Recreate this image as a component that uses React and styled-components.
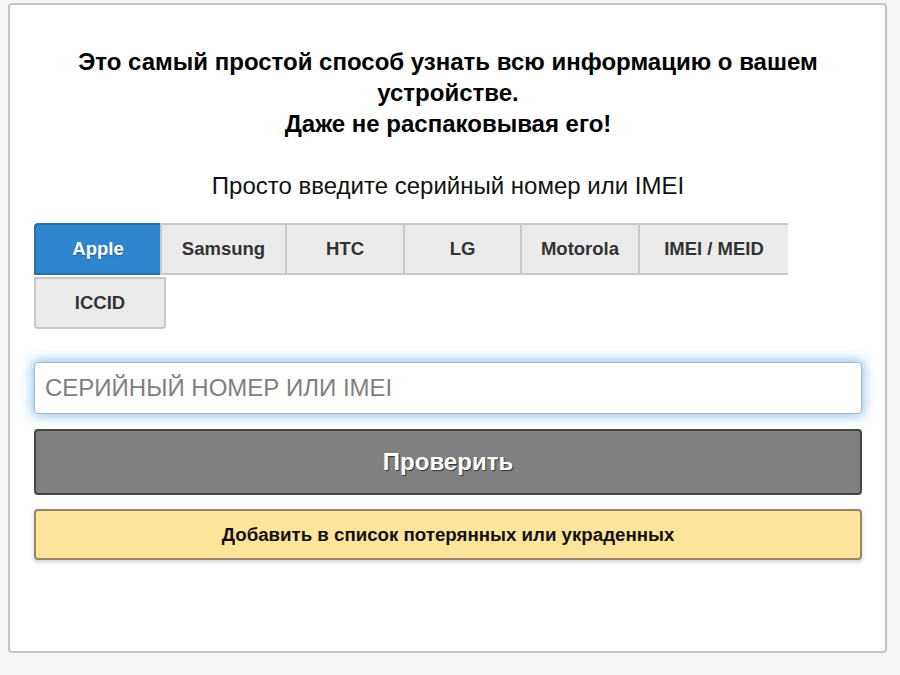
import React, { useState } from "react";
import styled, { createGlobalStyle } from "styled-components";

const GlobalStyle = createGlobalStyle`
  html, body {
    margin: 0;
    padding: 0;
    background: #f7f7f7;
    font-family: "Liberation Sans", Arial, sans-serif;
  }
`;

const Card = styled.div`
  box-sizing: border-box;
  width: 879px;
  height: 650px;
  margin: 3px 0 0 8px;
  padding: 41px 23px 0 24px;
  background: #fff;
  border: 2px solid #c3c3c3;
  border-radius: 4px;
`;

const Heading = styled.h1`
  margin: 0 auto;
  max-width: 790px;
  font-size: 24px;
  line-height: 31px;
  font-weight: bold;
  text-align: center;
  color: #000;
`;

const Lead = styled.p`
  margin: 31px 0 22px;
  font-size: 24px;
  line-height: 31px;
  text-align: center;
  color: #111;
`;

const Tabs = styled.div`
  display: flex;
  flex-wrap: wrap;
  row-gap: 2px;
`;

const Tab = styled.button`
  box-sizing: border-box;
  width: ${(p) => p.$w}px;
  height: 52px;
  padding: 0;
  font-family: inherit;
  font-size: 18.5px;
  font-weight: bold;
  cursor: pointer;
  color: ${(p) => (p.$active ? "#fff" : "#333")};
  background: ${(p) => (p.$active ? "#2f86cc" : "#ebebeb")};
  border-style: solid;
  border-color: ${(p) => (p.$active ? "#2a70a8" : "#c8c8c8")};
  border-width: 2px ${(p) => (p.$closed ? "2px" : "0")} 2px 2px;
  border-radius: ${(p) =>
    p.$active ? "4px 0 0 0" : p.$closed ? "0 0 4px 4px" : "0"};
  text-shadow: ${(p) => (p.$active ? "0 1px 1px rgba(0,0,0,.3)" : "none")};
`;

const Field = styled.input`
  box-sizing: border-box;
  display: block;
  width: 100%;
  height: 52px;
  margin-top: 33px;
  padding: 0 10px;
  font-family: inherit;
  font-size: 24px;
  color: #333;
  background: #fff;
  border: 1px solid #9fb6cc;
  border-radius: 4px;
  outline: none;
  box-shadow: 0 0 12px 2px rgba(102, 168, 225, 0.7);
  caret-color: #000;

  &::placeholder {
    color: #808080;
  }
`;

const CheckButton = styled.button`
  box-sizing: border-box;
  display: block;
  width: 100%;
  height: 66px;
  margin-top: 15px;
  font-family: inherit;
  font-size: 24px;
  font-weight: bold;
  color: #fff;
  text-shadow: 1px 1px 1px #333;
  background: #808080;
  border: 2px solid #454545;
  border-radius: 4px;
  cursor: pointer;
`;

const LostButton = styled.button`
  box-sizing: border-box;
  display: block;
  width: 100%;
  height: 51px;
  margin-top: 14px;
  font-family: inherit;
  font-size: 18.7px;
  font-weight: bold;
  color: #111;
  background: #ffe49c;
  border: 2px solid #9a8468;
  border-radius: 4px;
  box-shadow: 0 2px 4px rgba(0, 0, 0, 0.18);
  cursor: pointer;
`;

const brands = [
  { name: "Apple", w: 126 },
  { name: "Samsung", w: 125 },
  { name: "HTC", w: 118 },
  { name: "LG", w: 117 },
  { name: "Motorola", w: 118 },
  { name: "IMEI / MEID", w: 150 },
  { name: "ICCID", w: 132, closed: true },
];

export default function App() {
  const [active, setActive] = useState("Apple");
  return (
    <>
      <GlobalStyle />
      <Card>
        <Heading>
          Это самый простой способ узнать всю информацию о вашем устройстве.
          <br />
          Даже не распаковывая его!
        </Heading>
        <Lead>Просто введите серийный номер или IMEI</Lead>
        <Tabs>
          {brands.map((b) => (
            <Tab
              key={b.name}
              $w={b.w}
              $closed={b.closed}
              $active={active === b.name}
              onClick={() => setActive(b.name)}
            >
              {b.name}
            </Tab>
          ))}
        </Tabs>
        <Field autoFocus placeholder="СЕРИЙНЫЙ НОМЕР ИЛИ IMEI" />
        <CheckButton>Проверить</CheckButton>
        <LostButton>Добавить в список потерянных или украденных</LostButton>
      </Card>
    </>
  );
}
